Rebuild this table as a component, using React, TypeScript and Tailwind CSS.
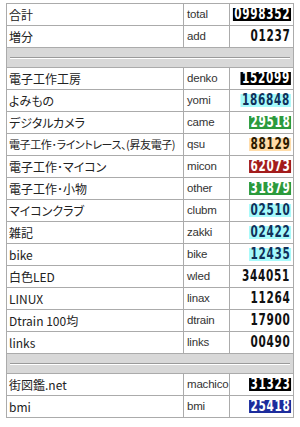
import React from 'react';

type Row =
  | { kind: 'sep' }
  | { kind: 'row'; name: string; key: string; count: string; style?: string; tight?: boolean };

// counter badge colours, roughly what the counter images showed
const black = 'bg-black text-white';
const cyan = 'bg-[#a6fafa] text-[#10305a]';
const green = 'bg-[#2c9a3c] text-white';
const orange = 'bg-[#ffdca8] text-[#2a1a00]';
const red = 'bg-[#a31c1c] text-white';
const navy = 'bg-[#1c2c9c] text-white';

const rows: Row[] = [
  { kind: 'row', name: '合計', key: 'total', count: '0998352', style: black },
  { kind: 'row', name: '増分', key: 'add', count: '01237' },
  { kind: 'sep' },
  { kind: 'row', name: '電子工作工房', key: 'denko', count: '152099', style: black },
  { kind: 'row', name: 'よみもの', key: 'yomi', count: '186848', style: cyan },
  { kind: 'row', name: 'デジタルカメラ', key: 'came', count: '29518', style: green },
  { kind: 'row', name: '電子工作･ライントレース、(昇友電子)', key: 'qsu', count: '88129', style: orange, tight: true },
  { kind: 'row', name: '電子工作･マイコン', key: 'micon', count: '62073', style: red },
  { kind: 'row', name: '電子工作･小物', key: 'other', count: '31879', style: green },
  { kind: 'row', name: 'マイコンクラブ', key: 'clubm', count: '02510', style: cyan },
  { kind: 'row', name: '雑記', key: 'zakki', count: '02422', style: cyan },
  { kind: 'row', name: 'bike', key: 'bike', count: '12435', style: cyan },
  { kind: 'row', name: '白色LED', key: 'wled', count: '344051' },
  { kind: 'row', name: 'LINUX', key: 'linax', count: '11264' },
  { kind: 'row', name: 'Dtrain 100均', key: 'dtrain', count: '17900' },
  { kind: 'row', name: 'links', key: 'links', count: '00490' },
  { kind: 'sep' },
  { kind: 'row', name: '街図鑑.net', key: 'machico', count: '31323', style: black },
  { kind: 'row', name: 'bmi', key: 'bmi', count: '25418', style: navy },
];

export default function App() {
  return (
    <div className="w-[300px] h-[427px] bg-white pt-[3px] pl-[6px] font-['Noto_Sans_CJK_JP','Noto_Sans',sans-serif] text-[12px] text-[#222]">
      <table className="w-[287px] border-collapse border border-[#ababab] table-fixed">
        <colgroup>
          <col className="w-[177px]" />
          <col className="w-[46px]" />
          <col className="w-[64px]" />
        </colgroup>
        <tbody>
          {rows.map((r, i) =>
            r.kind === 'sep' ? (
              <tr key={i} className="h-[20px]">
                <td colSpan={3} className="border border-[#ababab] bg-[#d8d8d8] px-[3px]">
                  <div className="border-t border-[#9a9a9a] border-b border-b-white" />
                </td>
              </tr>
            ) : (
              <tr key={i} className="h-[22px]">
                <td
                  className={`border border-[#ababab] px-[2px] whitespace-nowrap leading-none [font-feature-settings:'palt'] ${
                    r.tight ? 'text-[11px] tracking-[-0.4px]' : 'text-[12px]'
                  }`}
                >
                  {r.name}
                </td>
                <td className="border border-[#ababab] px-[3px] leading-none whitespace-nowrap font-['Liberation_Sans',sans-serif] text-[11.5px] tracking-[-0.2px] text-[#333]">
                  {r.key}
                </td>
                <td className="border border-[#ababab] pr-[2px] leading-none">
                  <div className="flex justify-end">
                    <span
                      className={`shrink-0 origin-right [transform:scaleX(0.7)] pl-[2px] pr-[1px] font-['DejaVu_Sans',sans-serif] font-bold text-[15px] leading-[13px] tracking-[1px] ${r.style ?? 'text-[#111]'}`}
                    >
                      {r.count}
                    </span>
                  </div>
                </td>
              </tr>
            )
          )}
        </tbody>
      </table>
    </div>
  );
}
